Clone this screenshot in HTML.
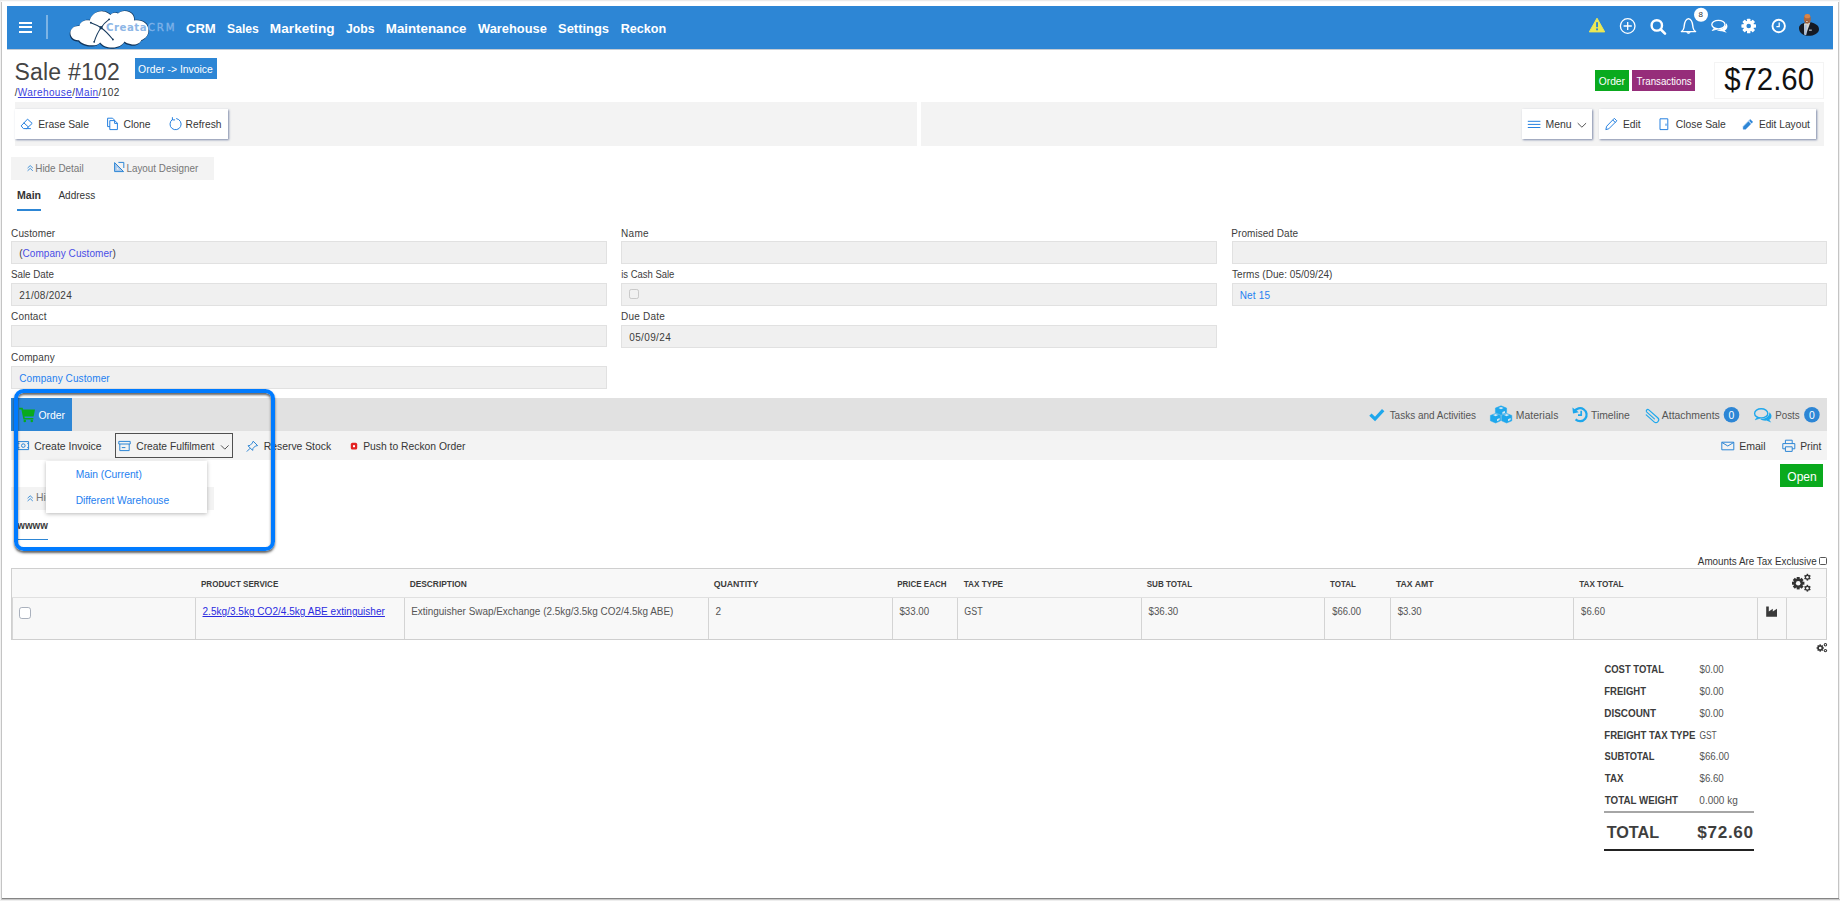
<!DOCTYPE html>
<html lang="en"><head>
<meta charset="utf-8">
<title>Sale #102</title>
<style>
*{box-sizing:border-box;margin:0;padding:0}
html,body{width:1840px;height:901px;overflow:hidden;background:#fff}
body{position:relative;font-family:"Liberation Sans",sans-serif;color:#333;font-size:10px}
.a{position:absolute}
.t{position:absolute;white-space:nowrap;line-height:1}
.hdr{left:7px;top:6px;width:1826px;height:43px;background:#2d86d5}
.nav{color:#fff;font-weight:bold;font-size:13.6px}
.bar{background:#f3f3f3}
.grp{background:#fff;box-shadow:1px 1px 2px rgba(50,70,120,.6)}
.btn{font-size:11px;color:#363636}
.lbl{font-size:10px;color:#3c3c3c}
.fld{background:#f0f0f0;border:1px solid #e1e1e1}
.val{font-size:10px;color:#3c3c3c}
.lnk{color:#1e80f0}
.th{font-size:9.4px;font-weight:bold;color:#3c3c3c}
.td{font-size:10px;color:#555}
.tl{font-size:10.4px;font-weight:bold;color:#3c3c3c}
.tv{font-size:10px;color:#555}
.tab2{font-size:10.4px;color:#555}
.vl{position:absolute;top:598px;width:1px;height:41px;background:#d4d4d4}
svg{position:absolute;overflow:visible}
a{text-decoration:underline}
</style>
</head>
<body>
<div class="a hdr"></div>
<div class="a" style="left:7px;top:49px;width:1826px;height:1px;background:#c3cbd3"></div><!--hdrshadow-->
<!-- hamburger -->
<div class="a" style="left:19px;top:22px;width:13px;height:2px;background:#fff"></div>
<div class="a" style="left:19px;top:26px;width:13px;height:2px;background:#fff"></div>
<div class="a" style="left:19px;top:31px;width:13px;height:2px;background:#fff"></div>
<div class="a" style="left:46px;top:15px;width:2px;height:24px;background:rgba(255,255,255,.38)"></div>
<!-- logo cloud -->
<svg style="left:60px;top:6px" width="130" height="44" viewBox="60 6 130 44">
  
  <path d="M79 40.2 C73.2 40.6 70.2 36.6 70.4 32.6 C70.6 28.4 74.4 25.4 79.4 26 C80.2 21.8 84.6 19.4 89.8 20.6 C91.2 14.6 96.8 10.8 102.8 11.4 C106 11.6 108.6 13 110.4 15 C112.4 12.6 115.6 12.2 118 13.6 C120.6 10.8 125.4 10.2 129.2 12 C132.8 13.6 134.6 17 134 20.6 C141.6 19.2 148.2 23.4 148.4 30 C148.6 35.4 145.4 38.6 141.4 40 C140.2 43.6 135 45.6 130.4 44 C127.4 43.6 125.6 42.6 124.6 41.6 C122.4 45.6 117.4 47.8 112 47.6 C106.6 47.6 102.4 45.4 100.2 42.4 C98.4 44.6 95 45.6 91.4 45.2 C86.4 45 81.6 43.8 79 40.2 Z" fill="#12365c" transform="translate(-0.7,1.2)"></path>
  <path d="M79 40.2 C73.2 40.6 70.2 36.6 70.4 32.6 C70.6 28.4 74.4 25.4 79.4 26 C80.2 21.8 84.6 19.4 89.8 20.6 C91.2 14.6 96.8 10.8 102.8 11.4 C106 11.6 108.6 13 110.4 15 C112.4 12.6 115.6 12.2 118 13.6 C120.6 10.8 125.4 10.2 129.2 12 C132.8 13.6 134.6 17 134 20.6 C141.6 19.2 148.2 23.4 148.4 30 C148.6 35.4 145.4 38.6 141.4 40 C140.2 43.6 135 45.6 130.4 44 C127.4 43.6 125.6 42.6 124.6 41.6 C122.4 45.6 117.4 47.8 112 47.6 C106.6 47.6 102.4 45.4 100.2 42.4 C98.4 44.6 95 45.6 91.4 45.2 C86.4 45 81.6 43.8 79 40.2 Z" fill="#12365c" transform="translate(0.6,-0.5)"></path>
  <path d="M79 40.2 C73.2 40.6 70.2 36.6 70.4 32.6 C70.6 28.4 74.4 25.4 79.4 26 C80.2 21.8 84.6 19.4 89.8 20.6 C91.2 14.6 96.8 10.8 102.8 11.4 C106 11.6 108.6 13 110.4 15 C112.4 12.6 115.6 12.2 118 13.6 C120.6 10.8 125.4 10.2 129.2 12 C132.8 13.6 134.6 17 134 20.6 C141.6 19.2 148.2 23.4 148.4 30 C148.6 35.4 145.4 38.6 141.4 40 C140.2 43.6 135 45.6 130.4 44 C127.4 43.6 125.6 42.6 124.6 41.6 C122.4 45.6 117.4 47.8 112 47.6 C106.6 47.6 102.4 45.4 100.2 42.4 C98.4 44.6 95 45.6 91.4 45.2 C86.4 45 81.6 43.8 79 40.2 Z" fill="#fff"></path>
  <g stroke="#173a5e" stroke-width="1.05" fill="none" stroke-linecap="round">
    <path d="M90.8 22.7 Q97 25 101.1 27.7 Q106 31 112.9 39.5"></path>
    <path d="M109.1 19.3 Q104 23 101.1 27.7 Q97 33 94.2 41.8"></path>
  </g>
  <g fill="#173a5e"><circle cx="90.8" cy="22.7" r=".9"></circle><circle cx="109.1" cy="19.3" r=".9"></circle><circle cx="112.9" cy="39.5" r=".9"></circle><circle cx="94.2" cy="41.8" r=".9"></circle><rect x="99.6" y="26.2" width="3" height="3"></rect></g>
</svg>
<span class="t" style="letter-spacing: 0.5px; font-family: &quot;DejaVu Sans&quot;, sans-serif; font-size: 10.2px; font-weight: bold; color: rgb(141, 182, 230); top: 23px; left: 106.06px;">Creata</span>
<span class="t" style="letter-spacing: 1.9px; font-family: &quot;DejaVu Sans&quot;, sans-serif; font-size: 10.2px; color: rgb(125, 177, 232); -webkit-text-stroke: 0.35px rgb(125, 177, 232); top: 23px; left: 147.85px;">CRM</span>
<!-- right icons -->
<svg style="left:1580px;top:6px" width="253" height="43" viewBox="1580 6 253 43">
  <path d="M1597 18.2 L1604.7 31.9 L1589.3 31.9 Z" fill="#ece955" stroke="#ece955" stroke-width="1" stroke-linejoin="round"></path>
  <rect x="1596.1" y="22.2" width="1.9" height="5" fill="#2d86d5"></rect><rect x="1596.1" y="28.4" width="1.9" height="1.9" fill="#2d86d5"></rect>
  <circle cx="1627.7" cy="26" r="7.3" fill="none" stroke="#fff" stroke-width="1.3"></circle>
  <path d="M1623.6 26h8.2M1627.7 21.9v8.2" stroke="#fff" stroke-width="1.3"></path>
  <circle cx="1656.8" cy="25.4" r="5.2" fill="none" stroke="#fff" stroke-width="2.4"></circle>
  <path d="M1660.6 29.3 L1665 33.6" stroke="#fff" stroke-width="2.6" stroke-linecap="round"></path>
  <path d="M1688.5 18.6 C1684.2 19.4 1684.4 24.5 1684 27.5 C1683.7 29.8 1682.6 30.8 1681.4 31.6 L1695.6 31.6 C1694.4 30.8 1693.3 29.8 1693 27.5 C1692.6 24.5 1692.8 19.4 1688.5 18.6 Z" fill="none" stroke="#fff" stroke-width="1.4" stroke-linejoin="round"></path>
  <path d="M1686.8 32.2 a1.8 1.8 0 0 0 3.4 0" fill="#fff" stroke="#fff" stroke-width=".8"></path>
  <circle cx="1701" cy="14.7" r="7" fill="#fff"></circle>
  <ellipse cx="1718.4" cy="24.6" rx="6.6" ry="4.3" fill="none" stroke="#fff" stroke-width="1.3"></ellipse>
  <path d="M1714.5 28 L1712.2 30.6 L1717.4 29" fill="#fff" stroke="#fff" stroke-width=".8" stroke-linejoin="round"></path>
  <path d="M1726.2 23.2 C1728.4 25.6 1727.6 29.2 1724.6 30.4 L1726.8 32.8 L1722 31.2 C1719.8 31.4 1717.6 30.9 1716.2 29.8 C1720 30 1725.6 28.4 1726.2 23.2 Z" fill="#fff"></path>
  <g fill="#fff" transform="translate(1748.7 26)">
    <rect x="-1.7" y="-7.3" width="3.4" height="14.6" rx=".6"></rect>
    <rect x="-1.7" y="-7.3" width="3.4" height="14.6" rx=".6" transform="rotate(45)"></rect>
    <rect x="-1.7" y="-7.3" width="3.4" height="14.6" rx=".6" transform="rotate(90)"></rect>
    <rect x="-1.7" y="-7.3" width="3.4" height="14.6" rx=".6" transform="rotate(135)"></rect>
    <circle r="5.4"></circle><circle r="2.3" fill="#2d86d5"></circle>
  </g>
  <circle cx="1778.7" cy="26" r="6.2" fill="none" stroke="#fff" stroke-width="1.9"></circle>
  <path d="M1779.2 22.4 V26.6 H1776.4" fill="none" stroke="#fff" stroke-width="1.3"></path>
  <!-- avatar -->
  <path d="M1799 28.4 C1798.8 25 1802.6 23.2 1805.6 22.6 L1811 22.2 C1815 23.4 1819 25 1819 29.2 C1819 33.2 1814 35.8 1808.6 35.8 C1803.2 35.8 1799.2 32.6 1799 28.4 Z" fill="#151a24"></path>
  <path d="M1804 23.6 L1810.4 22.2 L1807.6 30 L1805.8 35.2 L1804.2 34.6 Z" fill="#d2d2cc"></path>
  <path d="M1804.8 25 L1806.7 25 L1806.3 34.9 L1804.7 34.6 Z" fill="#a7bde0"></path>
  <ellipse cx="1807.3" cy="18.9" rx="3.5" ry="4.9" fill="#a96740"></ellipse>
  <ellipse cx="1807.4" cy="16.2" rx="2.8" ry="2.1" fill="#d98549"></ellipse>
  <ellipse cx="1806.8" cy="21.6" rx="1.8" ry="1.2" fill="#8f5636"></ellipse>
  <rect x="1806" y="21" width="1.8" height=".7" fill="#f1e4d8"></rect>
  <rect x="1809" y="29.6" width="2.8" height="1.1" fill="#cdd0d6"></rect>
</svg>
<span class="t" style="left:1698.6px;top:11px;font-size:8px;color:#333">8</span>
<span class="t nav" style="top: 22px; left: 185px; letter-spacing: 0px; transform: translateX(0.89px) scaleX(0.9668); transform-origin: 0px 50%;">CRM</span>
<span class="t nav" style="top: 22px; left: 227px; letter-spacing: 0px; transform: translateX(0.11px) scaleX(0.8937); transform-origin: 0px 50%;">Sales</span>
<span class="t nav" style="top: 22px; left: 269.78px; letter-spacing: 0.087px;">Marketing</span>
<span class="t nav" style="top: 22px; left: 345px; letter-spacing: 0px; transform: translateX(0.99px) scaleX(0.8985); transform-origin: 0px 50%;">Jobs</span>
<span class="t nav" style="top: 22px; left: 385px; letter-spacing: 0px; transform: translateX(0.78px) scaleX(0.9799); transform-origin: 0px 50%;">Maintenance</span>
<span class="t nav" style="top: 22px; left: 478px; letter-spacing: 0px; transform: translateX(0.02px) scaleX(0.9456); transform-origin: 0px 50%;">Warehouse</span>
<span class="t nav" style="top: 22px; left: 558px; letter-spacing: 0px; transform: translateX(0.04px) scaleX(0.9507); transform-origin: 0px 50%;">Settings</span>
<span class="t nav" style="top: 22px; left: 620px; letter-spacing: 0px; transform: translateX(0.69px) scaleX(0.9265); transform-origin: 0px 50%;">Reckon</span>
<!-- title -->
<span class="t" style="font-size: 23px; color: rgb(68, 68, 68); top: 61px; left: 14.42px; letter-spacing: 0.234px;">Sale #102</span>
<div class="a" style="left:135px;top:58px;width:82px;height:21px;background:#2d86d5"></div>
<span class="t" style="font-size: 10.5px; color: rgb(255, 255, 255); top: 64px; left: 138px; letter-spacing: 0px; transform: translateX(0.11px) scaleX(0.9873); transform-origin: 0px 50%;">Order -&gt; Invoice</span>
<span class="t" style="font-size: 10px; color: rgb(51, 51, 51); top: 88px; left: 14.69px; letter-spacing: 0.39px;">/<a style="color:#3b3fe0">Warehouse</a>/<a style="color:#3b3fe0">Main</a>/102</span>
<!-- badges / price -->
<div class="a" style="left:1595px;top:70px;width:33.5px;height:20.7px;background:#0aaa1e"></div>
<span class="t" style="font-size: 10.4px; color: rgb(255, 255, 255); top: 77px; left: 1598px; letter-spacing: 0px; transform: translateX(0.76px) scaleX(0.9852); transform-origin: 0px 50%;">Order</span>
<div class="a" style="left:1632.2px;top:70px;width:62.8px;height:20.7px;background:#962d7a"></div>
<span class="t" style="font-size: 10.4px; color: rgb(255, 255, 255); top: 77px; left: 1636px; letter-spacing: 0px; transform: translateX(0.51px) scaleX(0.9329); transform-origin: 0px 50%;">Transactions</span>
<div class="a" style="left:1713.5px;top:62px;width:110px;height:36.5px;border:1px solid #f4f4f4;background:#fff"></div>
<span class="t" style="font-size: 31px; color: rgb(17, 17, 17); top: 64px; left: 1724px; letter-spacing: 0px; transform: translateX(0.22px) scaleX(0.9468); transform-origin: 0px 50%;">$72.60</span>
<!-- toolbars -->
<div class="a bar" style="left:15px;top:102px;width:902px;height:43.5px"></div>
<div class="a bar" style="left:921px;top:102px;width:902.5px;height:43.5px"></div>
<div class="a grp" style="left:15px;top:109px;width:213px;height:30px"></div>
<div class="a grp" style="left:1522px;top:109px;width:70px;height:30px"></div>
<div class="a grp" style="left:1599px;top:109px;width:217px;height:30px"></div>
<span class="t btn" style="top: 119px; left: 38px; letter-spacing: 0px; transform: translateX(0.17px) scaleX(0.9431); transform-origin: 0px 50%;">Erase Sale</span>
<span class="t btn" style="top: 119px; left: 123px; letter-spacing: 0px; transform: translateX(0.46px) scaleX(0.9422); transform-origin: 0px 50%;">Clone</span>
<span class="t btn" style="top: 119px; left: 185px; letter-spacing: 0px; transform: translateX(0.62px) scaleX(0.9305); transform-origin: 0px 50%;">Refresh</span>
<span class="t btn" style="top: 119px; left: 1545px; letter-spacing: 0px; transform: translateX(0.58px) scaleX(0.9474); transform-origin: 0px 50%;">Menu</span>
<span class="t btn" style="top: 119px; left: 1622px; letter-spacing: 0px; transform: translateX(0.91px) scaleX(0.9387); transform-origin: 0px 50%;">Edit</span>
<span class="t btn" style="top: 119px; left: 1675px; letter-spacing: 0px; transform: translateX(0.82px) scaleX(0.9403); transform-origin: 0px 50%;">Close Sale</span>
<span class="t btn" style="top: 119px; left: 1758px; letter-spacing: 0px; transform: translateX(0.89px) scaleX(0.9265); transform-origin: 0px 50%;">Edit Layout</span>
<svg style="left:0;top:100px" width="1840" height="50" viewBox="0 100 1840 50" fill="none" stroke="#2681e0" stroke-width="1" stroke-linecap="round" stroke-linejoin="round">
  <!-- eraser -->
  <path d="M27.8 119.4 L32.2 123.4 L26.6 128.6 L23.4 128.6 L21.4 126.2 Z M24 123 L28.4 127 M26 128.6 H30.5"></path>
  <!-- clone -->
  <path d="M109.6 126.6 H107.6 V118.2 H112.6 L114.4 120 M110.2 120.6 H114.8 L117.4 123.2 V129.6 H110.2 Z M114.6 120.8 V123.4 H117.2"></path>
  <!-- refresh -->
  <path d="M172.2 119.6 A5.6 5.6 0 1 0 176.6 118.6 M172.4 117.6 V119.9 H174.7"></path>
  <!-- menu -->
  <path d="M1528.2 121.3 H1540 M1528.2 124.4 H1540 M1528.2 127.5 H1540"></path>
  <path d="M1578 123.4 L1581.9 127.2 L1585.8 123.4" stroke="#555"></path>
  <!-- edit pencil -->
  <path d="M1614.6 118.6 L1616.8 120.8 L1608.8 128.8 L1605.8 129.6 L1606.6 126.6 Z M1613 120.2 L1615.2 122.4"></path>
  <!-- door -->
  <path d="M1660.4 118.8 H1667.8 V129.6 H1660.4 Z M1666 124 V125.4"></path>
  <!-- edit layout filled pencil -->
  <path d="M1750.4 119.6 L1752.8 122 L1751.6 123.2 L1749.2 120.8 Z M1748.4 121.6 L1750.8 124 L1745.6 129.2 L1743.2 129.2 L1743.2 126.8 Z" fill="#2d86d5" stroke-width=".4"></path>
</svg>
<!-- hide detail -->
<div class="a bar" style="left:11.3px;top:157.3px;width:202.5px;height:22.7px"></div>
<span class="t" style="font-size: 10.4px; color: rgb(119, 119, 119); top: 164px; left: 35px; letter-spacing: 0px; transform: translateX(0.23px) scaleX(0.9551); transform-origin: 0px 50%;">Hide Detail</span>
<span class="t" style="font-size: 10.4px; color: rgb(119, 119, 119); top: 164px; left: 126px; letter-spacing: 0px; transform: translateX(0.43px) scaleX(0.9502); transform-origin: 0px 50%;">Layout Designer</span>
<svg style="left:0;top:155px" width="220" height="30" viewBox="0 155 220 30" fill="none" stroke="#2d86d5" stroke-width="1" stroke-linejoin="round">
  <path d="M27.6 168 L30.2 165.6 L32.8 168 M27.6 170.8 L30.2 168.4 L32.8 170.8" stroke-width=".9"></path>
  <path d="M114.6 162.6 V171.6 H123.6 Z" fill="#a9c8ea" stroke="none"></path><path d="M114.6 162.6 V171.6 H123.6 M114.6 162.6 L123.6 171.6"></path><path d="M116.8 167.2 V169.6 H119.2 Z" fill="#f3f3f3" stroke="none"></path>
  <path d="M118.4 162.4 H123.8 V168"></path>
</svg>
<span class="t" style="font-size: 10.6px; color: rgb(51, 51, 51); font-weight: bold; top: 190px; left: 16.88px; letter-spacing: 0.027px;">Main</span>
<span class="t" style="font-size: 10.6px; color: rgb(51, 51, 51); top: 190px; left: 58px; letter-spacing: 0px; transform: translateX(0.44px) scaleX(0.9448); transform-origin: 0px 50%;">Address</span>
<div class="a" style="left:17.4px;top:208.8px;width:23.4px;height:2px;background:#2d86d5"></div>
<!-- form -->
<span class="t lbl" style="top: 229px; left: 11.06px; letter-spacing: 0.113px;">Customer</span>
<div class="a fld" style="left:11px;top:241px;width:596px;height:22.7px"></div>
<span class="t val" style="top: 249px; left: 19.17px; letter-spacing: 0.059px;"><span>(</span><span style="color:#4a4ee6">Company Customer</span><span>)</span></span>
<span class="t lbl" style="top: 270px; left: 10px; letter-spacing: 0px; transform: translateX(0.95px) scaleX(0.9781); transform-origin: 0px 50%;">Sale Date</span>
<div class="a fld" style="left:11px;top:283.2px;width:596px;height:22.5px"></div>
<span class="t val" style="top: 291px; left: 19.31px; letter-spacing: 0.264px;">21/08/2024</span>
<span class="t lbl" style="top: 312px; left: 11.06px; letter-spacing: 0.169px;">Contact</span>
<div class="a fld" style="left:11px;top:325.2px;width:596px;height:21.5px"></div>
<span class="t lbl" style="top: 353px; left: 11.06px; letter-spacing: 0.149px;">Company</span>
<div class="a fld" style="left:11px;top:366.2px;width:596px;height:22.5px"></div>
<span class="t val lnk" style="top: 374px; left: 19.28px; letter-spacing: 0.097px;">Company Customer</span>

<span class="t lbl" style="top: 229px; left: 621.03px; letter-spacing: 0.322px;">Name</span>
<div class="a fld" style="left:621px;top:241px;width:596.4px;height:22.7px"></div>
<span class="t lbl" style="top: 270px; left: 621px; letter-spacing: 0px; transform: translateX(0.24px) scaleX(0.9464); transform-origin: 0px 50%;">is Cash Sale</span>
<div class="a fld" style="left:621px;top:283.2px;width:596.4px;height:22.5px"></div>
<div class="a" style="left:629.2px;top:289.2px;width:9.6px;height:9.4px;border:1px solid #c9c9c9;border-radius:2.2px;background:#f1f1f1"></div>
<span class="t lbl" style="top: 312px; left: 621.03px; letter-spacing: 0.229px;">Due Date</span>
<div class="a fld" style="left:621px;top:325.2px;width:596.4px;height:22.6px"></div>
<span class="t val" style="top: 333px; left: 629.28px; letter-spacing: 0.357px;">05/09/24</span>

<span class="t lbl" style="top: 229px; left: 1231.25px; letter-spacing: 0.063px;">Promised Date</span>
<div class="a fld" style="left:1232px;top:241px;width:595px;height:22.7px"></div>
<span class="t lbl" style="top: 270px; left: 1232.02px; letter-spacing: 0.046px;">Terms (Due: 05/09/24)</span>
<div class="a fld" style="left:1232px;top:283.2px;width:595px;height:22.5px"></div>
<span class="t val lnk" style="top: 291px; left: 1239.63px; letter-spacing: 0.218px;">Net 15</span>
<!-- order tab bar -->
<div class="a" style="left:11px;top:398.2px;width:1816px;height:32.6px;background:#e1e1e1"></div>
<div class="a" style="left:11px;top:398.2px;width:61px;height:32.6px;background:#2d86d5"></div>
<svg style="left:0;top:398px" width="1840" height="34" viewBox="0 398 1840 34">
  <!-- cart -->
  <g fill="#08aa1c">
    <path d="M19.2 407.8 H22.6 L23.2 409.4 H35 L33.6 416.6 H24.4 L24.8 418 H33.4 V419.4 H23.4 L21.4 409.4 H19.2 Z"></path>
    <circle cx="24.8" cy="421" r="1.3"></circle><circle cx="31.8" cy="421" r="1.3"></circle>
  </g>
  <!-- check -->
  <path d="M1370.4 414.6 L1375 419 L1383.2 410.2" fill="none" stroke="#1ea7ec" stroke-width="3.3"></path>
  <!-- cubes -->
  <g fill="#1ea7ec" stroke="#1ea7ec" stroke-width=".5" stroke-linejoin="round">
    <path d="M1501 405.8 L1506.6 408.1 V412.6 L1501 415 L1495.4 412.6 V408.1 Z"></path>
    <path d="M1495.6 413.4 L1500.6 415.4 V420.8 L1495.6 423 L1490.4 420.8 V415.4 Z"></path>
    <path d="M1506.6 413.4 L1511.8 415.4 V420.8 L1506.6 423 L1501.6 420.8 V415.4 Z"></path>
  </g>
  <g fill="#d4e7f2">
    <path d="M1501 407 L1503.6 408.1 L1501 409.2 L1498.4 408.1 Z"></path><path d="M1502.4 412 L1505 410.9 V412.9 L1502.4 414 Z"></path>
    <path d="M1495.6 414 L1498.2 415.1 L1495.6 416.2 L1493 415.1 Z"></path><path d="M1497 419.2 L1499.6 418.1 V420.1 L1497 421.2 Z"></path>
    <path d="M1506.6 414 L1509.2 415.1 L1506.6 416.2 L1504 415.1 Z"></path><path d="M1508 419.2 L1510.6 418.1 V420.1 L1508 421.2 Z"></path>
  </g>
  <!-- history -->
  <path d="M1574.4 411.6 A6.5 6.5 0 1 1 1575.6 419.4" fill="none" stroke="#1ea7ec" stroke-width="2.2"></path>
  <path d="M1572.4 407.4 L1573 413.4 L1578.8 412.2 Z" fill="#1ea7ec"></path>
  <path d="M1581.2 410.8 V415.2 H1578" fill="none" stroke="#1ea7ec" stroke-width="1.7"></path>
  <!-- paperclip -->
  <g transform="translate(1651.2 415.6) rotate(41.5)" fill="none" stroke="#1ea7ec" stroke-width="1.15" stroke-linecap="round">
    <path d="M4.6 0.3 L-5.6 0.3 A1.5 1.5 0 0 1 -5.6 -2.7 L6.3 -2.7 A2.75 2.75 0 0 1 6.3 2.8 L-4.2 2.8"></path>
  </g>
  <!-- badges -->
  <circle cx="1731.5" cy="414.8" r="7.8" fill="#2d86d5"></circle>
  <circle cx="1811.9" cy="414.8" r="7.8" fill="#2d86d5"></circle>
  <!-- comments -->
  <ellipse cx="1761.2" cy="413.4" rx="6.6" ry="4.6" fill="none" stroke="#1ea7ec" stroke-width="1.4"></ellipse>
  <path d="M1757.4 417 L1755.2 419.8 L1760 418.2" fill="#1ea7ec" stroke="#1ea7ec" stroke-width=".6"></path>
  <path d="M1769.4 412.2 C1772.4 414.4 1772 418.4 1769.2 419.8 L1771.2 422.4 L1766.4 420.6 C1764 420.8 1761.6 420.2 1760.2 419 C1765 419.2 1769.4 416.8 1769.4 412.2 Z" fill="#1ea7ec"></path>
</svg>
<span class="t" style="font-size: 10.4px; color: rgb(255, 255, 255); top: 411px; left: 38.45px; letter-spacing: 0.015px;">Order</span>
<span class="t tab2" style="top: 411px; left: 1389px; letter-spacing: 0px; transform: translateX(0.63px) scaleX(0.9596); transform-origin: 0px 50%;">Tasks and Activities</span>
<span class="t tab2" style="top: 411px; left: 1515.85px; letter-spacing: 0.043px;">Materials</span>
<span class="t tab2" style="top: 411px; left: 1590px; letter-spacing: 0px; transform: translateX(0.95px) scaleX(0.9968); transform-origin: 0px 50%;">Timeline</span>
<span class="t tab2" style="top: 411px; left: 1661.8px; letter-spacing: 0.018px;">Attachments</span>
<span class="t tab2" style="top: 411px; left: 1775px; letter-spacing: 0px; transform: translateX(0.28px) scaleX(0.94); transform-origin: 0px 50%;">Posts</span>
<span class="t" style="font-size: 10.4px; color: rgb(255, 255, 255); top: 411px; left: 1728.59px;">0</span>
<span class="t" style="font-size: 10.4px; color: rgb(255, 255, 255); top: 411px; left: 1808.97px;">0</span>
<!-- action bar -->
<div class="a bar" style="left:11px;top:430.8px;width:1816px;height:29.6px"></div>
<div class="a" style="left:115px;top:433.3px;width:118px;height:24.7px;border:1px solid #505050"></div>
<span class="t btn" style="top: 441px; left: 34px; letter-spacing: 0px; transform: translateX(0.26px) scaleX(0.9486); transform-origin: 0px 50%;">Create Invoice</span>
<span class="t btn" style="top: 441px; left: 136px; letter-spacing: 0px; transform: translateX(0.26px) scaleX(0.933); transform-origin: 0px 50%;">Create Fulfilment</span>
<span class="t btn" style="top: 441px; left: 263px; letter-spacing: 0px; transform: translateX(0.74px) scaleX(0.9421); transform-origin: 0px 50%;">Reserve Stock</span>
<span class="t btn" style="top: 441px; left: 363px; letter-spacing: 0px; transform: translateX(0.17px) scaleX(0.9392); transform-origin: 0px 50%;">Push to Reckon Order</span>
<span class="t btn" style="top: 441px; left: 1739px; letter-spacing: 0px; transform: translateX(0.13px) scaleX(0.9593); transform-origin: 0px 50%;">Email</span>
<span class="t btn" style="top: 441px; left: 1800px; letter-spacing: 0px; transform: translateX(0.21px) scaleX(0.9354); transform-origin: 0px 50%;">Print</span>
<svg style="left:0;top:432px" width="1840" height="28" viewBox="0 432 1840 28" fill="none" stroke="#2d86d5" stroke-width="1" stroke-linejoin="round">
  <!-- money -->
  <path d="M18 441.6 H28.6 V449.6 H18 Z"></path><circle cx="23.3" cy="445.6" r="1.8"></circle><path d="M18 443.6 H19.6 M27 443.6 H28.6 M18 447.6 H19.6 M27 447.6 H28.6" stroke-width=".8"></path>
  <!-- archive -->
  <path d="M118.8 441.4 H130.2 V444 H118.8 Z M119.8 444 V450.6 H129.2 V444 M121.8 447.6 H125.4"></path>
  <path d="M221 445.4 L224.8 449.2 L228.6 445.4" stroke="#555"></path>
  <!-- pin -->
  <path d="M253.2 441.2 L257.6 445.6 L255.4 446 L253 448.4 L252.6 450.4 L248 445.8 L250 445.4 L252.4 443 Z M250.2 448.2 L246.8 451.6"></path>
  <!-- reckon red -->
  <rect x="350.8" y="442.8" width="6.4" height="6.8" rx="1.6" fill="#e32222" stroke="none"></rect><rect x="353" y="445.2" width="2" height="2" fill="#fff" stroke="none"></rect>
  <!-- email -->
  <path d="M1721.8 442.2 H1733.8 V449.8 H1721.8 Z M1721.8 442.4 L1727.8 446 L1733.8 442.4"></path>
  <!-- print -->
  <path d="M1785.4 443.6 V440.2 H1792.2 V443.6 M1785.4 448.8 H1782.8 V443.6 H1794.8 V448.8 H1792.2 M1785.4 446.8 H1792.2 V451.4 H1785.4 Z"></path>
</svg>
<!-- open -->
<div class="a" style="left:1780px;top:464.2px;width:43.3px;height:22.6px;background:#0aaa1e"></div>
<span class="t" style="font-size: 12.4px; color: rgb(255, 255, 255); top: 471px; left: 1787px; letter-spacing: 0px; transform: translateX(0.32px) scaleX(0.9712); transform-origin: 0px 50%;">Open</span>
<!-- second hide detail (partly hidden) -->
<div class="a bar" style="left:11.3px;top:487.3px;width:202.5px;height:22.8px"></div>
<span class="t" style="font-size: 10.4px; color: rgb(119, 119, 119); top: 493px; left: 36px; letter-spacing: 0px;">Hide Detail</span>
<span class="t" style="font-size: 10.4px; color: rgb(119, 119, 119); top: 493px; left: 127px; letter-spacing: 0px;">Layout Designer</span>
<svg style="left:0;top:485px" width="220" height="30" viewBox="0 485 220 30" fill="none" stroke="#2d86d5" stroke-width=".9" stroke-linejoin="round">
  <path d="M27.6 498.2 L30.2 495.8 L32.8 498.2 M27.6 501 L30.2 498.6 L32.8 501"></path>
</svg>
<span class="t" style="font-size: 10.6px; color: rgb(58, 58, 58); font-weight: bold; top: 520px; left: 17px; letter-spacing: 0px; transform: translateX(0.37px) scaleX(0.9253); transform-origin: 0px 50%;">wwww</span>
<div class="a" style="left:17.4px;top:538.8px;width:30.8px;height:1.6px;background:#2d86d5"></div>
<!-- dropdown -->
<div class="a" style="left:46px;top:460.6px;width:161.4px;height:52.4px;background:#fff;box-shadow:0 1px 4px rgba(0,0,0,.28)"></div>
<span class="t lnk" style="font-size: 10.4px; top: 470px; left: 75px; letter-spacing: 0px; transform: translateX(0.66px) scaleX(0.9886); transform-origin: 0px 50%;">Main (Current)</span>
<span class="t lnk" style="font-size: 10.4px; top: 496px; left: 75px; letter-spacing: 0px; transform: translateX(0.66px) scaleX(0.9874); transform-origin: 0px 50%;">Different Warehouse</span>
<!-- highlight -->
<div class="a" style="left:14.3px;top:389px;width:261px;height:162px;border:4px solid #007bff;border-radius:9.5px;box-shadow:0 2px 2.5px rgba(0,0,0,.62), inset 0 2px 2.5px rgba(0,0,0,.62)"></div>
<!-- tax exclusive -->
<span class="t" style="font-size: 10.4px; color: rgb(51, 51, 51); top: 557px; left: 1697px; letter-spacing: 0px; transform: translateX(0.81px) scaleX(0.9495); transform-origin: 0px 50%;">Amounts Are Tax Exclusive</span>
<div class="a" style="left:1819.4px;top:557.2px;width:7.8px;height:7.8px;border:1px solid #555;border-radius:1.5px;background:#fff"></div>
<!-- table -->
<div class="a" style="left:11.4px;top:567.8px;width:1815.8px;height:72px;background:#f8f8f8;border:1px solid #cfcfcf"></div>
<div class="a" style="left:12px;top:597px;width:1814.6px;height:1px;background:#e0e0e0"></div>
<div class="vl" style="left:12.4px;background:#d6d6d6"></div>
<div class="vl" style="left:195.2px"></div><div class="vl" style="left:404px"></div><div class="vl" style="left:708px"></div>
<div class="vl" style="left:891.5px"></div><div class="vl" style="left:957.3px"></div><div class="vl" style="left:1140.8px"></div>
<div class="vl" style="left:1324.2px"></div><div class="vl" style="left:1390.2px"></div><div class="vl" style="left:1573.4px"></div>
<div class="vl" style="left:1756.6px"></div><div class="vl" style="left:1786.2px"></div>
<span class="t th" style="top: 579px; left: 200px; letter-spacing: 0px; transform: translateX(1px) scaleX(0.859); transform-origin: 0px 50%;">PRODUCT SERVICE</span>
<span class="t th" style="top: 579px; left: 409px; letter-spacing: 0px; transform: translateX(0.64px) scaleX(0.8915); transform-origin: 0px 50%;">DESCRIPTION</span>
<span class="t th" style="top: 579px; left: 713px; letter-spacing: 0px; transform: translateX(0.63px) scaleX(0.9313); transform-origin: 0px 50%;">QUANTITY</span>
<span class="t th" style="top: 579px; left: 897px; letter-spacing: 0px; transform: translateX(0.18px) scaleX(0.8518); transform-origin: 0px 50%;">PRICE EACH</span>
<span class="t th" style="top: 579px; left: 963px; letter-spacing: 0px; transform: translateX(0.65px) scaleX(0.8734); transform-origin: 0px 50%;">TAX TYPE</span>
<span class="t th" style="top: 579px; left: 1146px; letter-spacing: 0px; transform: translateX(0.71px) scaleX(0.8591); transform-origin: 0px 50%;">SUB TOTAL</span>
<span class="t th" style="top: 579px; left: 1330px; letter-spacing: 0px; transform: translateX(0.02px) scaleX(0.8489); transform-origin: 0px 50%;">TOTAL</span>
<span class="t th" style="top: 579px; left: 1395px; letter-spacing: 0px; transform: translateX(0.96px) scaleX(0.9239); transform-origin: 0px 50%;">TAX AMT</span>
<span class="t th" style="top: 579px; left: 1579px; letter-spacing: 0px; transform: translateX(0.13px) scaleX(0.8709); transform-origin: 0px 50%;">TAX TOTAL</span>
<div class="a" style="left:19.4px;top:607px;width:11.6px;height:11.8px;border:1px solid #aab1bd;border-radius:2.8px;background:#fff"></div>
<span class="t td" style="color: rgb(42, 42, 223); top: 607px; left: 202.52px; letter-spacing: 0.031px;"><a>2.5kg/3.5kg CO2/4.5kg ABE extinguisher</a></span>
<span class="t td" style="top: 607px; left: 411px; letter-spacing: 0px; transform: translateX(0.23px) scaleX(0.9929); transform-origin: 0px 50%;">Extinguisher Swap/Exchange (2.5kg/3.5kg CO2/4.5kg ABE)</span>
<span class="t td" style="top: 607px; left: 715.49px;">2</span>
<span class="t td" style="top: 607px; left: 899px; letter-spacing: 0px; transform: translateX(0.45px) scaleX(0.971); transform-origin: 0px 50%;">$33.00</span>
<span class="t td" style="top: 607px; left: 964px; letter-spacing: 0px; transform: translateX(0.37px) scaleX(0.8923); transform-origin: 0px 50%;">GST</span>
<span class="t td" style="top: 607px; left: 1148px; letter-spacing: 0px; transform: translateX(0.51px) scaleX(0.971); transform-origin: 0px 50%;">$36.30</span>
<span class="t td" style="top: 607px; left: 1332px; letter-spacing: 0px; transform: translateX(0.2px) scaleX(0.9442); transform-origin: 0px 50%;">$66.00</span>
<span class="t td" style="top: 607px; left: 1397px; letter-spacing: 0px; transform: translateX(0.64px) scaleX(0.9571); transform-origin: 0px 50%;">$3.30</span>
<span class="t td" style="top: 607px; left: 1581px; letter-spacing: 0px; transform: translateX(0.07px) scaleX(0.9571); transform-origin: 0px 50%;">$6.60</span>
<svg style="left:1760px;top:570px" width="70" height="85" viewBox="1760 570 70 85">
  <!-- gears -->
  <g fill="#333">
    <g transform="translate(1798.2 583.2)">
      <rect x="-1.5" y="-6.2" width="3" height="12.4"></rect><rect x="-1.5" y="-6.2" width="3" height="12.4" transform="rotate(45)"></rect><rect x="-1.5" y="-6.2" width="3" height="12.4" transform="rotate(90)"></rect><rect x="-1.5" y="-6.2" width="3" height="12.4" transform="rotate(135)"></rect>
      <circle r="4.7"></circle><circle r="2.3" fill="#f8f8f8"></circle>
    </g>
    <g transform="translate(1807.4 577.2)">
      <rect x="-.8" y="-3.4" width="1.6" height="6.8"></rect><rect x="-.8" y="-3.4" width="1.6" height="6.8" transform="rotate(60)"></rect><rect x="-.8" y="-3.4" width="1.6" height="6.8" transform="rotate(120)"></rect>
      <circle r="2.5"></circle><circle r="1.2" fill="#f8f8f8"></circle>
    </g>
    <g transform="translate(1807.4 588.2)">
      <rect x="-.8" y="-3.4" width="1.6" height="6.8"></rect><rect x="-.8" y="-3.4" width="1.6" height="6.8" transform="rotate(60)"></rect><rect x="-.8" y="-3.4" width="1.6" height="6.8" transform="rotate(120)"></rect>
      <circle r="2.5"></circle><circle r="1.2" fill="#f8f8f8"></circle>
    </g>
  </g>
  <!-- factory -->
  <path d="M1766.2 606.4 H1768.8 V611.4 L1772.8 608.8 V611.4 L1777 608.8 V616.8 H1766.2 Z" fill="#3a3a3a"></path>
  <!-- small gears -->
  <g fill="#333">
    <g transform="translate(1820.2 648)">
      <rect x="-.8" y="-3.6" width="1.6" height="7.2"></rect><rect x="-.8" y="-3.6" width="1.6" height="7.2" transform="rotate(45)"></rect><rect x="-.8" y="-3.6" width="1.6" height="7.2" transform="rotate(90)"></rect><rect x="-.8" y="-3.6" width="1.6" height="7.2" transform="rotate(135)"></rect>
      <circle r="2.7"></circle><circle r="1.3" fill="#fff"></circle>
    </g>
    <g transform="translate(1825.4 644.8)"><circle r="1.7"></circle><circle r=".7" fill="#fff"></circle></g>
    <g transform="translate(1825.4 650.6)"><circle r="1.7"></circle><circle r=".7" fill="#fff"></circle></g>
  </g>
</svg>
<!-- totals -->
<span class="t tl" style="top: 665px; left: 1604px; letter-spacing: 0px; transform: translateX(0.45px) scaleX(0.909); transform-origin: 0px 50%;">COST TOTAL</span><span class="t tv" style="top: 665px; left: 1699px; letter-spacing: 0px; transform: translateX(0.55px) scaleX(0.9654); transform-origin: 0px 50%;">$0.00</span>
<span class="t tl" style="top: 687px; left: 1604px; letter-spacing: 0px; transform: translateX(0.29px) scaleX(0.9135); transform-origin: 0px 50%;">FREIGHT</span><span class="t tv" style="top: 687px; left: 1699px; letter-spacing: 0px; transform: translateX(0.55px) scaleX(0.9654); transform-origin: 0px 50%;">$0.00</span>
<span class="t tl" style="top: 709px; left: 1604px; letter-spacing: 0px; transform: translateX(0.26px) scaleX(0.9545); transform-origin: 0px 50%;">DISCOUNT</span><span class="t tv" style="top: 709px; left: 1699px; letter-spacing: 0px; transform: translateX(0.55px) scaleX(0.9654); transform-origin: 0px 50%;">$0.00</span>
<span class="t tl" style="top: 731px; left: 1604px; letter-spacing: 0px; transform: translateX(0.29px) scaleX(0.9239); transform-origin: 0px 50%;">FREIGHT TAX TYPE</span><span class="t tv" style="top: 731px; left: 1699px; letter-spacing: 0px; transform: translateX(0.42px) scaleX(0.8416); transform-origin: 0px 50%;">GST</span>
<span class="t tl" style="top: 752px; left: 1604px; letter-spacing: 0px; transform: translateX(0.43px) scaleX(0.9001); transform-origin: 0px 50%;">SUBTOTAL</span><span class="t tv" style="top: 752px; left: 1699px; letter-spacing: 0px; transform: translateX(0.55px) scaleX(0.971); transform-origin: 0px 50%;">$66.00</span>
<span class="t tl" style="top: 774px; left: 1604px; letter-spacing: 0px; transform: translateX(0.77px) scaleX(0.937); transform-origin: 0px 50%;">TAX</span><span class="t tv" style="top: 774px; left: 1699px; letter-spacing: 0px; transform: translateX(0.55px) scaleX(0.9654); transform-origin: 0px 50%;">$6.60</span>
<span class="t tl" style="top: 796px; left: 1604px; letter-spacing: 0px; transform: translateX(0.77px) scaleX(0.9399); transform-origin: 0px 50%;">TOTAL WEIGHT</span><span class="t tv" style="top: 796px; left: 1699.34px; letter-spacing: 0.004px;">0.000 kg</span>
<div class="a" style="left:1604.3px;top:811px;width:149.6px;height:2px;background:#a6a6a6"></div>
<span class="t" style="font-size: 17.2px; font-weight: bold; color: rgb(62, 62, 62); top: 824px; left: 1606px; letter-spacing: 0px; transform: translateX(0.65px) scaleX(0.9429); transform-origin: 0px 50%;">TOTAL</span>
<span class="t" style="font-size: 17.2px; font-weight: bold; color: rgb(62, 62, 62); top: 824px; left: 1697.31px; letter-spacing: 0.652px;">$72.60</span>
<div class="a" style="left:1604.3px;top:849px;width:149.6px;height:2px;background:#222"></div>
<!-- screenshot frame shadow -->
<div class="a" style="left:0;top:0;width:1840px;height:1px;background:#eaeaea"></div>
<div class="a" style="left:0;top:1px;width:1840px;height:1px;background:#fafafa"></div>
<div class="a" style="left:0;top:1px;width:1px;height:900px;background:#f1f1f1"></div>
<div class="a" style="left:1px;top:2px;width:1px;height:897px;background:#c4c4c4"></div>
<div class="a" style="left:1838px;top:2px;width:1px;height:897px;background:#c4c4c4"></div>
<div class="a" style="left:1839px;top:1px;width:1px;height:900px;background:#efefef"></div>
<div class="a" style="left:2px;top:898px;width:1837px;height:1px;background:#858585"></div>
<div class="a" style="left:1px;top:899px;width:1839px;height:1px;background:#c8c8c8"></div>
<div class="a" style="left:0;top:900px;width:1840px;height:1px;background:#eeeeee"></div>


</body></html>
